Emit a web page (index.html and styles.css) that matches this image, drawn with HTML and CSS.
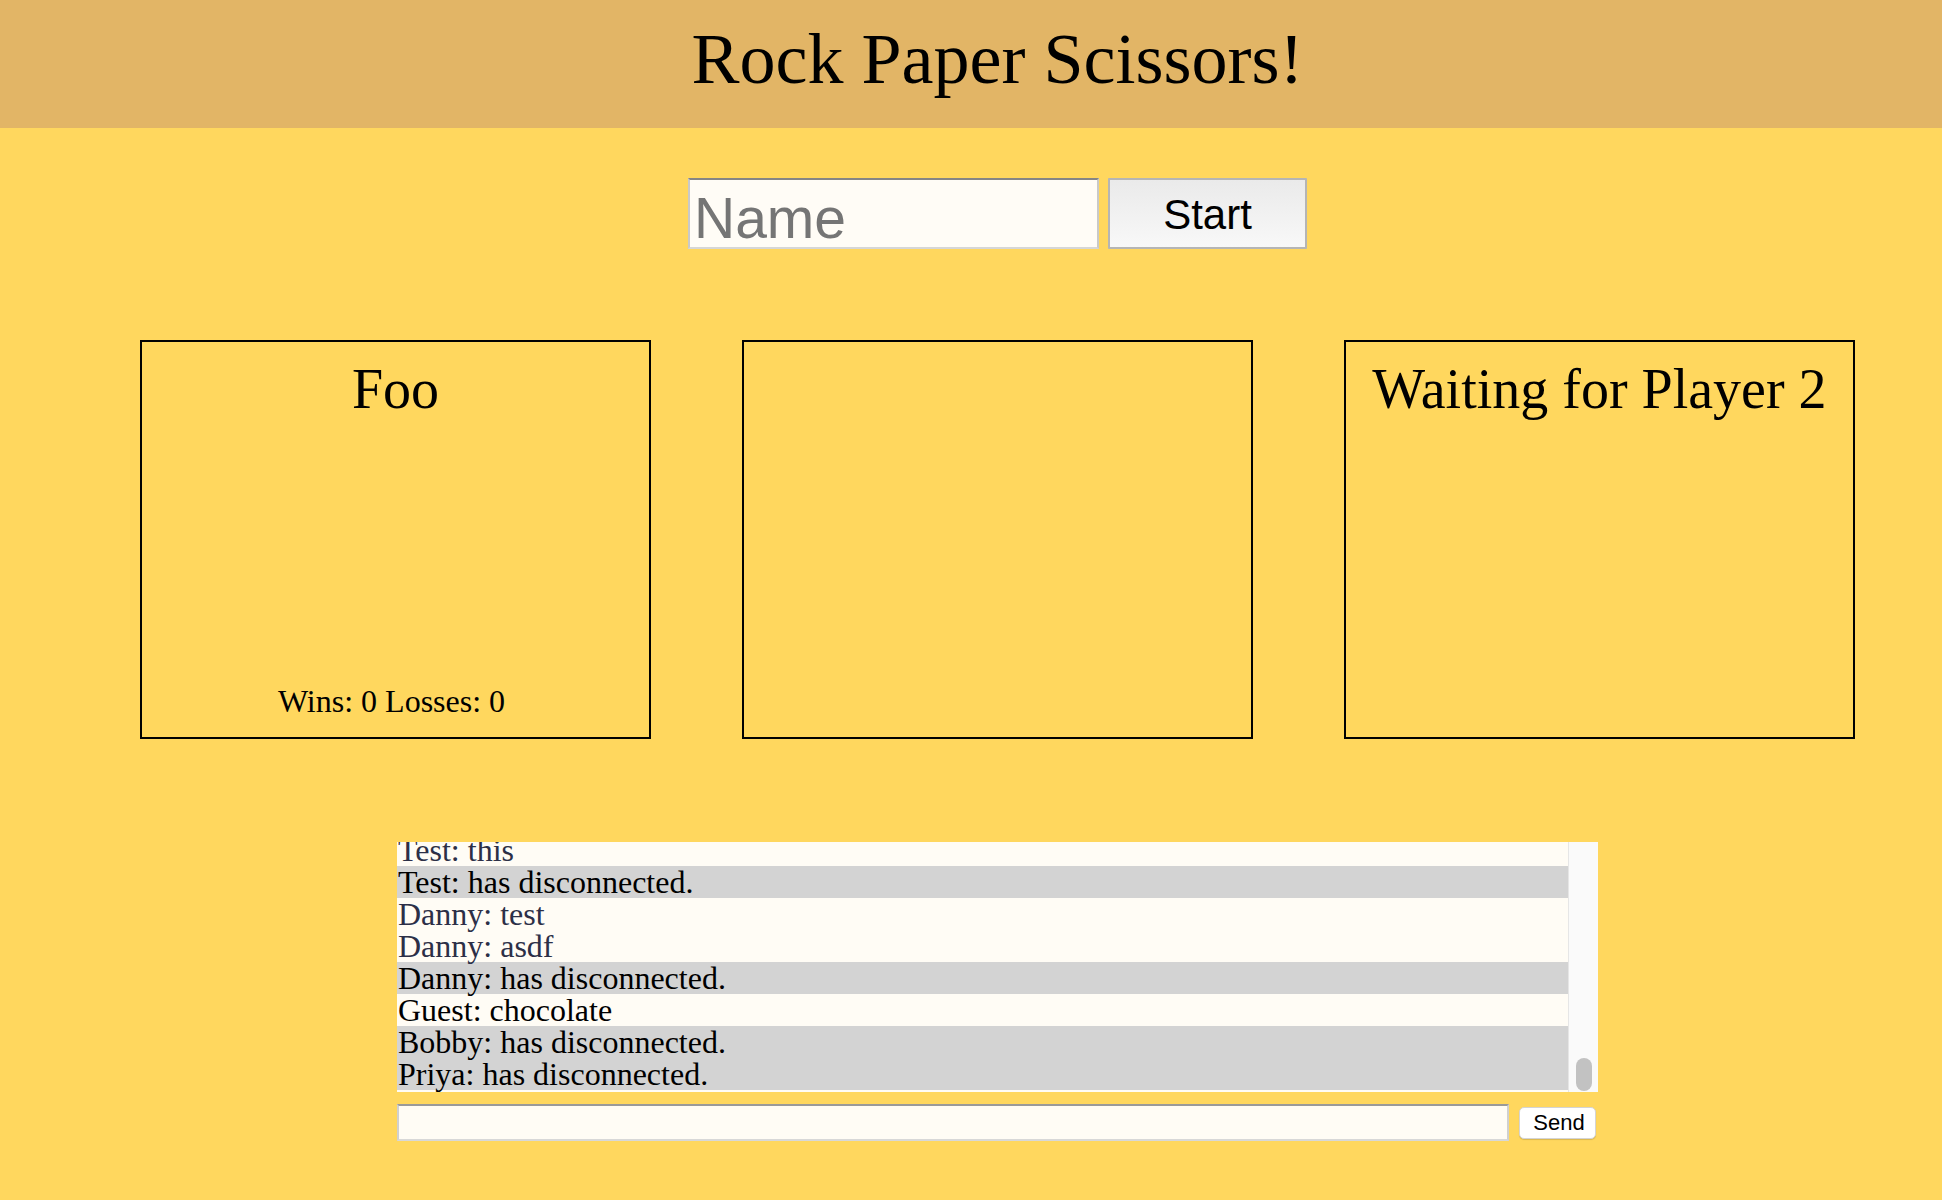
FILE: index.html
```html
<!DOCTYPE html>
<html lang="en">
<head>
<meta charset="utf-8">
<title>Rock Paper Scissors!</title>
<link rel="stylesheet" href="styles.css">
</head>
<body>
<header class="top">
  <h1 class="title">Rock Paper Scissors!</h1>
</header>
<main class="page">
  <form class="join">
    <input class="name-input" type="text" placeholder="Name">
    <button class="start-btn" type="button">Start</button>
  </form>
  <section class="arena">
    <div class="panel">
      <h2 class="panel-title">Foo</h2>
      <p class="score">Wins: 0 Losses: 0&nbsp;</p>
    </div>
    <div class="panel"></div>
    <div class="panel">
      <h2 class="panel-title">Waiting for Player 2</h2>
    </div>
  </section>
  <section class="chat">
    <div class="chat-box">
      <div class="chat-log">
        <div class="chat-rows">
          <div class="msg dim">Test: this</div>
          <div class="msg alt">Test: has disconnected.</div>
          <div class="msg dim">Danny: test</div>
          <div class="msg dim">Danny: asdf</div>
          <div class="msg alt">Danny: has disconnected.</div>
          <div class="msg">Guest: chocolate</div>
          <div class="msg alt">Bobby: has disconnected.</div>
          <div class="msg alt">Priya: has disconnected.</div>
        </div>
      </div>
      <div class="scrollbar"><div class="thumb"></div></div>
    </div>
    <div class="chat-form">
      <input class="chat-input" type="text">
      <button class="send-btn" type="button">Send</button>
    </div>
  </section>
</main>
</body>
</html>
```

FILE: styles.css
```css
html, body {
  margin: 0;
  padding: 0;
}

body {
  background: #FFD75E;
  font-family: "Liberation Serif", "Times New Roman", serif;
  color: #000;
  min-height: 1200px;
}

.top {
  background: #E2B566;
  height: 128px;
  box-sizing: border-box;
  padding-left: 53px;
  text-align: center;
}

.title {
  margin: 0;
  padding-top: 18px;
  font-size: 72px;
  line-height: 82px;
  font-weight: normal;
}

.page {
  padding-left: 53px;
  display: flex;
  flex-direction: column;
  align-items: center;
}

.join {
  display: flex;
  gap: 9px;
  margin: 50px 0 0;
}

.name-input {
  width: 411px;
  height: 71px;
  box-sizing: border-box;
  border: 2px solid;
  border-color: #858585 #c9c9c9 #d6d6d6 #c9c9c9;
  background: #FFFCF6;
  font-family: "Liberation Sans", Arial, sans-serif;
  font-size: 57px;
  padding: 8px 2px 0 4px;
  color: #000;
}

.name-input::placeholder {
  color: #757575;
}

.start-btn {
  width: 199px;
  height: 71px;
  box-sizing: border-box;
  border: 2px solid #b5b5b5;
  border-radius: 1px;
  background: linear-gradient(#eaeaea, #f8f8f8);
  font-family: "Liberation Sans", Arial, sans-serif;
  font-size: 42px;
  color: #000;
  padding: 2px 0 0;
}

.arena {
  display: flex;
  gap: 91px;
  margin-top: 91px;
}

.panel {
  width: 511px;
  height: 399px;
  box-sizing: border-box;
  border: 2px solid #000;
  display: flex;
  flex-direction: column;
  align-items: center;
}

.panel-title {
  margin: 0;
  padding-top: 15px;
  font-size: 56px;
  font-weight: normal;
  line-height: normal;
}

.score {
  margin: auto 0 17px;
  font-size: 32px;
  line-height: normal;
}

.chat {
  width: 1201px;
  margin-top: 103px;
}

.chat-box {
  display: flex;
  height: 250px;
  background: #FFFCF5;
  overflow: hidden;
}

.chat-log {
  flex: 1;
  overflow: hidden;
}

.chat-rows {
  margin-top: -8px;
}

.msg {
  height: 32px;
  padding-left: 1px;
  font-size: 32px;
  line-height: 32px;
  white-space: nowrap;
}

.msg.alt {
  background: #D3D3D3;
}

.msg.dim {
  color: #2c2f47;
}

.scrollbar {
  width: 29px;
  border-left: 1px solid #E6E6E6;
  background: #FAFAFA;
  display: flex;
  flex-direction: column;
  justify-content: flex-end;
  align-items: center;
  padding-bottom: 1px;
}

.thumb {
  width: 16px;
  height: 33px;
  border-radius: 8px;
  background: #C2C2C2;
}

.chat-form {
  display: flex;
  align-items: center;
  gap: 10px;
  margin-top: 12px;
}

.chat-input {
  width: 1112px;
  height: 37px;
  box-sizing: border-box;
  border: 2px solid;
  border-color: #9a9a9a #d0d0d0 #d8d8d8 #d0d0d0;
  background: #FFFCF5;
  padding: 0 2px;
}

.send-btn {
  width: 77px;
  height: 32px;
  box-sizing: border-box;
  background: #fff;
  border: 1px solid #d4d4d4;
  border-radius: 5px;
  box-shadow: 0 1px 1px rgba(0, 0, 0, 0.15);
  font-family: "Liberation Sans", Arial, sans-serif;
  font-size: 22px;
  color: #000;
  padding: 0 0 0 3px;
}
```
